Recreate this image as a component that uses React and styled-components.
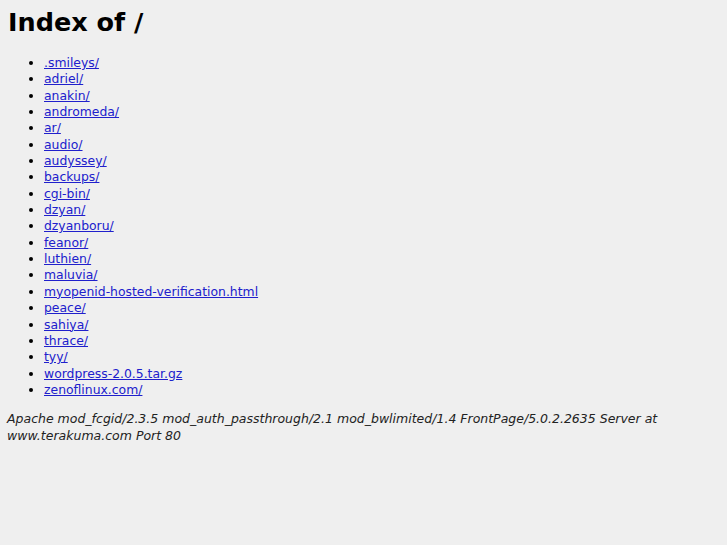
import React from "react";
import styled, { createGlobalStyle } from "styled-components";

const entries = [
  ".smileys/",
  "adriel/",
  "anakin/",
  "andromeda/",
  "ar/",
  "audio/",
  "audyssey/",
  "backups/",
  "cgi-bin/",
  "dzyan/",
  "dzyanboru/",
  "feanor/",
  "luthien/",
  "maluvia/",
  "myopenid-hosted-verification.html",
  "peace/",
  "sahiya/",
  "thrace/",
  "tyy/",
  "wordpress-2.0.5.tar.gz",
  "zenoflinux.com/",
];

const GlobalStyle = createGlobalStyle`
  html, body {
    margin: 0;
    background: #efefef;
  }
  body {
    padding: 8px;
    font-family: "DejaVu Sans", Verdana, sans-serif;
    font-size: 12.4px;
    color: #000;
  }
`;

const Title = styled.h1`
  margin: 0 0 19px;
  font-size: 25.5px;
  line-height: 28px;
  font-weight: bold;
`;

const List = styled.ul`
  margin: 0 0 12px;
  padding-left: 36px;
  list-style: disc;
`;

const Item = styled.li`
  line-height: 16.35px;
`;

const Link = styled.a`
  color: #2020cc;
  text-decoration: underline;
`;

const Address = styled.address`
  font-style: italic;
  font-size: 12.5px;
  color: #222;
  line-height: 17px;
  margin-left: -1px;
`;

export default function App() {
  return (
    <>
      <GlobalStyle />
      <Title>Index of /</Title>
      <List>
        {entries.map((name) => (
          <Item key={name}>
            <Link href={name}>{name}</Link>
          </Item>
        ))}
      </List>
      <Address>
        Apache mod_fcgid/2.3.5 mod_auth_passthrough/2.1 mod_bwlimited/1.4
        FrontPage/5.0.2.2635 Server at www.terakuma.com Port 80
      </Address>
    </>
  );
}
